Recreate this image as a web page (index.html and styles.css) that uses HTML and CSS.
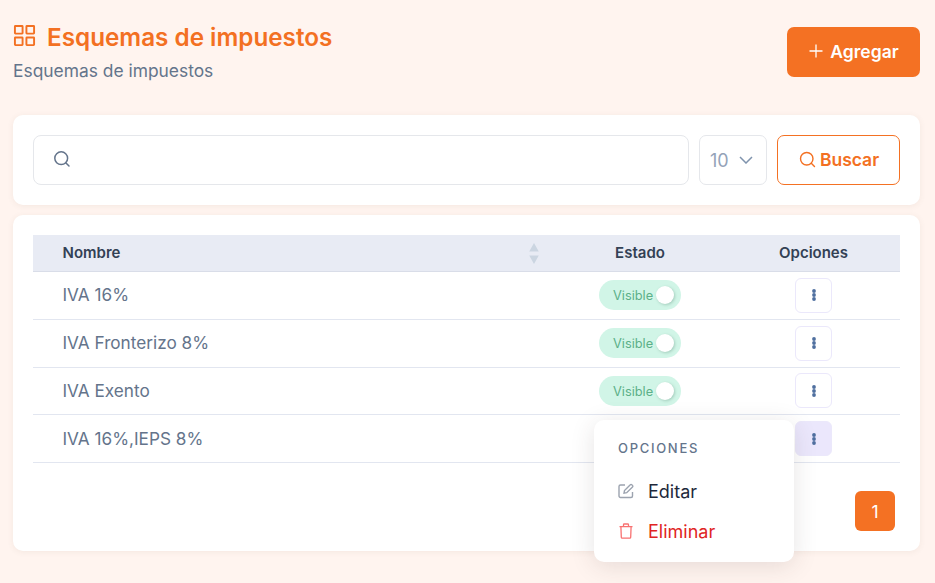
FILE: index.html
```html
<!DOCTYPE html>
<html lang="es">
<head>
<meta charset="utf-8">
<title>Esquemas de impuestos</title>
<link rel="stylesheet" href="styles.css">
</head>
<body>
<main class="page">
  <header class="head">
    <div class="head-text">
      <h1 class="title">
        <svg class="title-icon" viewBox="0 0 24 24" fill="none" stroke="currentColor" stroke-width="2"><rect x="2" y="2" width="8" height="8" rx="0.5"/><rect x="14" y="2" width="8" height="8" rx="0.5"/><rect x="2" y="14" width="8" height="8" rx="0.5"/><rect x="14" y="14" width="8" height="8" rx="0.5"/></svg>
        <span>Esquemas de impuestos</span>
      </h1>
      <p class="subtitle">Esquemas de impuestos</p>
    </div>
    <button class="add-btn">
      <svg class="plus" viewBox="0 0 14 14" fill="none" stroke="currentColor" stroke-width="1.3"><path d="M7 .5v13M.5 7h13"/></svg>
      Agregar
    </button>
  </header>

  <section class="card filters">
    <div class="search-box">
      <svg class="search-icon" viewBox="0 0 18 18" fill="none" stroke="currentColor" stroke-width="1.5"><circle cx="8.2" cy="8.2" r="6.4"/><path d="M13 13l3 3" stroke-linecap="round"/></svg>
    </div>
    <div class="select">
      <span>10</span>
      <svg class="chev" viewBox="0 0 14 8" fill="none" stroke="currentColor" stroke-width="1.5"><path d="M1 1l6 6 6-6"/></svg>
    </div>
    <button class="search-btn">
      <svg class="search-icon2" viewBox="0 0 18 18" fill="none" stroke="currentColor" stroke-width="1.5"><circle cx="8.2" cy="8.2" r="6.6"/><path d="M13 13l3.4 3.4" stroke-linecap="round"/></svg>
      Buscar
    </button>
  </section>

  <section class="card table-card">
    <div class="table">
      <div class="row head-row">
        <div class="c-name name-head">Nombre
          <svg class="sort" viewBox="0 0 10 22" fill="#cbd5e1"><path d="M5 0l5 9H0zM5 22L0 13h10z"/></svg>
        </div>
        <div class="c-state">Estado</div>
        <div class="c-opt">Opciones</div>
      </div>
      <div class="row body-row">
        <div class="c-name">IVA 16%</div>
        <div class="c-state"><span class="toggle">Visible<i class="knob"></i></span></div>
        <div class="c-opt"><button class="dots"><svg viewBox="0 0 4 12" fill="currentColor"><circle cx="2" cy="2" r="1.9"/><circle cx="2" cy="6" r="1.9"/><circle cx="2" cy="10" r="1.9"/></svg></button></div>
      </div>
      <div class="row body-row">
        <div class="c-name">IVA Fronterizo 8%</div>
        <div class="c-state"><span class="toggle">Visible<i class="knob"></i></span></div>
        <div class="c-opt"><button class="dots"><svg viewBox="0 0 4 12" fill="currentColor"><circle cx="2" cy="2" r="1.9"/><circle cx="2" cy="6" r="1.9"/><circle cx="2" cy="10" r="1.9"/></svg></button></div>
      </div>
      <div class="row body-row">
        <div class="c-name">IVA Exento</div>
        <div class="c-state"><span class="toggle">Visible<i class="knob"></i></span></div>
        <div class="c-opt"><button class="dots"><svg viewBox="0 0 4 12" fill="currentColor"><circle cx="2" cy="2" r="1.9"/><circle cx="2" cy="6" r="1.9"/><circle cx="2" cy="10" r="1.9"/></svg></button></div>
      </div>
      <div class="row body-row">
        <div class="c-name">IVA 16%,IEPS 8%</div>
        <div class="c-state"></div>
        <div class="c-opt"><button class="dots active"><svg viewBox="0 0 4 12" fill="currentColor"><circle cx="2" cy="2" r="1.9"/><circle cx="2" cy="6" r="1.9"/><circle cx="2" cy="10" r="1.9"/></svg></button></div>
      </div>
    </div>
    <div class="pager"><button class="page-btn">1</button></div>
    <div class="menu">
      <div class="menu-title">OPCIONES</div>
      <div class="menu-item">
        <svg class="menu-icon" viewBox="0 0 16 16" fill="none" stroke="#9ca3af" stroke-width="1.4"><path d="M14.5 9v4a1.5 1.5 0 0 1-1.5 1.5H2.5A1.5 1.5 0 0 1 1 13V3.5A1.5 1.5 0 0 1 2.5 2H7"/><path d="M6 10.2l.5-2.7L12.3 1.7a1 1 0 0 1 1.5 0l.7.7a1 1 0 0 1 0 1.5L8.7 9.7z"/></svg>
        <span>Editar</span>
      </div>
      <div class="menu-item danger">
        <svg class="menu-icon" viewBox="0 0 16 16" fill="none" stroke="#f87171" stroke-width="1.3"><path d="M1.5 3.6h13M5.5 3.6V1.8a.8.8 0 0 1 .8-.8h3.4a.8.8 0 0 1 .8.8v1.8M2.9 3.6l.4 10.6a1 1 0 0 0 1 1h7.4a1 1 0 0 0 1-1l.4-10.6"/></svg>
        <span>Eliminar</span>
      </div>
    </div>
  </section>
</main>
</body>
</html>
```

FILE: styles.css
```css
* { box-sizing: border-box; }
html, body { margin: 0; height: 100%; }
body {
  background: #fff4ef;
  font-family: Inter, "Liberation Sans", sans-serif;
  color: #64748b;
  overflow: hidden;
}
button { font-family: inherit; cursor: pointer; }
.page { padding: 20px 15px 0 13px; }
.head {
  display: flex;
  justify-content: space-between;
  align-items: flex-start;
  height: 95px;
}
.title {
  display: flex;
  align-items: center;
  gap: 11px;
  margin: 0;
  height: 34px;
  padding-top: 1px;
  font-size: 24.25px;
  line-height: 34px;
  font-weight: 600;
  color: #f37022;
}
.title-icon { width: 23px; height: 23px; margin-top: -4px; }
.subtitle { margin: 7px 0 0; font-size: 17.4px; line-height: 20px; color: #64748b; }
.add-btn {
  display: flex;
  align-items: center;
  justify-content: center;
  gap: 7px;
  width: 133px;
  height: 50px;
  margin-top: 7px;
  padding: 0 0 2px 1px;
  border: 0;
  border-radius: 7px;
  background: #f47123;
  color: #fff;
  font-size: 17.5px;
  font-weight: 600;
}
.plus { width: 14px; height: 14px; }
.card {
  background: #fff;
  border-radius: 10px;
  box-shadow: 0 1px 6px rgba(120, 90, 70, .08);
}
.filters {
  display: flex;
  gap: 10px;
  height: 90px;
  padding: 20px;
  margin-bottom: 10px;
}
.search-box {
  flex: 1;
  display: flex;
  align-items: center;
  padding-left: 19px;
  border: 1px solid #e5e7eb;
  border-radius: 8px;
  color: #64748b;
}
.search-icon { width: 18px; height: 18px; margin-top: -2px; }
.select {
  display: flex;
  align-items: center;
  justify-content: space-between;
  width: 68px;
  padding: 0 13px 0 10px;
  border: 1px solid #e5e7eb;
  border-radius: 7px;
  font-size: 18px;
  color: #94a3b8;
}
.chev { width: 14px; height: 8px; color: #7f93ad; }
.search-btn {
  display: flex;
  align-items: center;
  justify-content: center;
  gap: 4px;
  width: 123px;
  padding: 0 0 2px 1px;
  border: 1px solid #f47123;
  border-radius: 7px;
  background: #fff;
  color: #f37022;
  font-size: 17.5px;
  font-weight: 600;
}
.search-icon2 { width: 17px; height: 17px; }
.table-card {
  position: relative;
  height: 336px;
  padding: 20px;
}
.row { display: flex; align-items: center; }
.head-row {
  height: 37px;
  padding-bottom: 2px;
  background: #e8ebf4;
  border-bottom: 1px solid #d9dde8;
  font-size: 15px;
  font-weight: 600;
  color: #334155;
}
.body-row {
  height: 47.75px;
  border-bottom: 1px solid #e2e6f0;
  font-size: 17.2px;
  color: #64748b;
}
.c-name { width: 520px; padding: 0 0 1px 29.5px; }
.name-head { display: flex; justify-content: space-between; align-items: center; padding: 0 14px 0 29.5px; }
.sort { width: 10px; height: 21px; margin-top: 2px; }
.c-state { width: 174px; display: flex; justify-content: center; }
.c-opt { width: 173px; display: flex; justify-content: center; }
.toggle {
  position: relative;
  display: block;
  width: 82px;
  height: 30px;
  padding-left: 14px;
  border-radius: 15px;
  background: #d1f5e7;
  color: #5cb088;
  font-size: 12.8px;
  line-height: 31px;
}
.knob {
  position: absolute;
  right: 7px;
  top: 6px;
  width: 18px;
  height: 18px;
  border-radius: 50%;
  background: #fff;
  box-shadow: 1px 1px 3px rgba(80, 130, 110, .35);
}
.dots {
  display: flex;
  align-items: center;
  justify-content: center;
  width: 37px;
  height: 35px;
  padding: 0;
  border: 1px solid #ebe8fb;
  border-radius: 6px;
  background: #fff;
  color: #4f6f9f;
}
.dots svg { width: 4px; height: 12px; }
.dots.active { background: #ebe7fc; }
.pager { display: flex; justify-content: flex-end; padding: 28px 5px 0 0; }
.page-btn {
  width: 40px;
  height: 40px;
  border: 0;
  border-radius: 6px;
  background: #f47123;
  color: #fff;
  font-size: 17.5px;
}
.menu {
  position: absolute;
  left: 581px;
  top: 205px;
  width: 200px;
  height: 142px;
  padding: 20px 24px 0;
  border-radius: 10px;
  background: #fff;
  box-shadow: 0 4px 24px rgba(60, 50, 50, .13);
}
.menu-title {
  font-size: 13px;
  line-height: 16px;
  letter-spacing: 1.7px;
  font-weight: 500;
  color: #64748b;
  margin-bottom: 15px;
}
.menu-item {
  display: flex;
  align-items: center;
  gap: 14px;
  height: 40px;
  font-size: 18px;
  color: #1e293b;
}
.menu-item.danger { color: #e02424; }
.menu-icon { width: 16px; height: 16px; }
```
